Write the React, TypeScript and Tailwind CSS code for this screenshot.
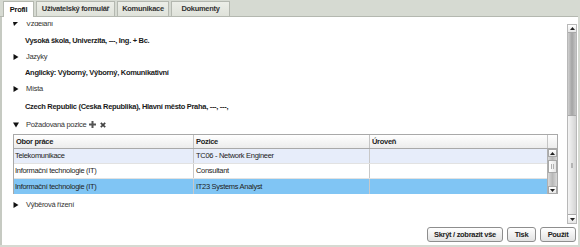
import React from "react";

function Tri({ down }: { down?: boolean }) {
  return (
    <svg width="6" height="6" viewBox="0 0 6 6" className="shrink-0">
      {down ? <polygon points="0,0.5 6,0.5 3,5.5" fill="#111" /> : <polygon points="0.5,0 5.5,3 0.5,6" fill="#111" />}
    </svg>
  );
}

function SmallArrow({ up }: { up?: boolean }) {
  return (
    <svg width="5" height="3" viewBox="0 0 5 3">
      {up ? <polygon points="0,3 5,3 2.5,0" fill="#222" /> : <polygon points="0,0 5,0 2.5,3" fill="#222" />}
    </svg>
  );
}

function Tab({ label, active, w }: { label: string; active?: boolean; w: string }) {
  return (
    <div
      className={
        active
          ? `${w} h-[16px] -mb-px bg-white border border-b-0 border-[#b4b8b0] flex items-center justify-center font-bold text-[#111]`
          : `${w} h-[15px] bg-gradient-to-b from-[#eceee8] to-[#dfe2da] border border-b-0 border-[#b4b8b0] flex items-center justify-center font-bold text-[#333]`
      }
    >
      {label}
    </div>
  );
}

function Section({ label, down, children }: { label: string; down?: boolean; children?: React.ReactNode }) {
  return (
    <div className="h-[16px] flex items-center gap-[7px] text-[#333]">
      <Tri down={down} />
      <span>{label}</span>
      {children}
    </div>
  );
}

function Value({ text, h }: { text: string; h: string }) {
  return <div className={`${h} flex items-center pl-[12px] font-bold text-[#1a1a1a]`}>{text}</div>;
}

function Button({ label, w }: { label: string; w: string }) {
  return (
    <div className={`${w} h-[15px] rounded-[3px] border border-[#8e8e8e] bg-gradient-to-b from-white to-[#e2e2e2] flex items-center justify-center font-bold text-[#222]`}>
      {label}
    </div>
  );
}

const rows = [
  { a: "Telekomunikace", b: "TC06 - Network Engineer", bg: "bg-[#e7edfa]" },
  { a: "Informační technologie (IT)", b: "Consultant", bg: "bg-white" },
  { a: "Informační technologie (IT)", b: "IT23 Systems Analyst", bg: "bg-[#80c5f4]" },
];

export default function App() {
  return (
    <div className="w-[580px] h-[247px] bg-[#d6dad2] flex flex-col overflow-hidden font-['Liberation_Sans',Arial,sans-serif] text-[7.5px] tracking-[-0.3px] text-[#222]">
      {/* tab bar */}
      <div className="h-[17px] shrink-0 flex items-end gap-[2px] pl-[3px] border-b border-[#b4b8b0] mr-[2px]">
        <Tab label="Profil" active w="w-[31px]" />
        <Tab label="Uživatelský formulář" w="w-[79px]" />
        <Tab label="Komunikace" w="w-[52px]" />
        <Tab label="Dokumenty" w="w-[59px]" />
      </div>

      {/* panel */}
      <div className="flex-1 min-h-0 bg-white border-l-2 border-[#c6cac2] mr-[2px] mb-[2px] flex flex-col pt-[5px]">
        <div className="h-[202px] shrink-0 flex">
          {/* scroll viewport */}
          <div className="flex-1 overflow-hidden pl-[11px]">
            <div className="-mt-[7px] flex flex-col">
              <div className="h-[17px] flex items-center gap-[7px] text-[#333]">
                <svg width="6" height="6" viewBox="0 0 6 6" className="shrink-0">
                  <polygon points="0,1 6,0 1,5" fill="#111" />
                </svg>
                <span>Vzdělání</span>
              </div>
              <Value h="h-[17px]" text="Vysoká škola, Univerzita, ---, Ing. + Bc." />
              <Section label="Jazyky" />
              <Value h="h-[16px]" text="Anglický: Výborný, Výborný, Komunikativní" />
              <Section label="Místa" />
              <Value h="h-[19px]" text="Czech Republic (Ceska Republika), Hlavní město Praha, ---, ---," />
              <div className="h-[17px] flex items-center gap-[7px] text-[#333]">
                <Tri down />
                <span>Požadovaná pozice</span>
                <div className="flex items-center gap-[4px] -ml-[4px]">
                  <svg width="7" height="7" viewBox="0 0 7 7">
                    <rect x="2.5" y="0" width="2" height="7" fill="#555" />
                    <rect x="0" y="2.5" width="7" height="2" fill="#555" />
                  </svg>
                  <svg width="6" height="6" viewBox="0 0 6 6">
                    <path d="M0.8 0.8 L5.2 5.2 M5.2 0.8 L0.8 5.2" stroke="#444" strokeWidth="1.7" />
                  </svg>
                </div>
              </div>

              {/* table */}
              <div className="mt-[1px] w-[545px] border border-b-0 border-[#a9a9a9] flex flex-col">
                <div className="h-[14px] flex border-b border-[#a9a9a9] bg-gradient-to-b from-white to-[#ececec] font-bold text-[#222]">
                  <div className="w-[180px] border-r border-[#c4c4c4] flex items-center pl-[2px]">Obor práce</div>
                  <div className="w-[176px] border-r border-[#c4c4c4] flex items-center pl-[2px]">Pozice</div>
                  <div className="flex-1 border-r border-[#c4c4c4] flex items-center pl-[2px]">Úroveň</div>
                  <div className="w-[9px]" />
                </div>
                <div className="flex">
                  <div className="flex-1 flex flex-col">
                    {rows.map((r, i) => (
                      <div key={i} className={`h-[15px] flex ${r.bg} ${i < 2 ? "border-b border-[#e2e2e2]" : ""}`}>
                        <div className="w-[180px] border-r border-[#c8c8c8] flex items-center pl-[1px]">{r.a}</div>
                        <div className="w-[176px] border-r border-[#c8c8c8] flex items-center pl-[2px]">{r.b}</div>
                        <div className="flex-1" />
                      </div>
                    ))}
                  </div>
                  <div className="w-[10px] border-l border-[#b0b0b0] flex flex-col bg-gradient-to-r from-[#d8d8d8] via-[#b8b8b8] to-[#d8d8d8]">
                    <div className="h-[8px] border border-[#a8a8a8] bg-gradient-to-b from-white to-[#e8e8e8] flex items-center justify-center">
                      <SmallArrow up />
                    </div>
                    <div className="mt-[3px] h-[13px] border border-[#a8a8a8] bg-gradient-to-r from-white to-[#e6e6e6] flex items-center justify-center">
                      <div className="w-[3px] h-[5px] border-x border-[#b0b0b0]" />
                    </div>
                    <div className="flex-1" />
                    <div className="h-[8px] border border-[#a8a8a8] bg-gradient-to-b from-white to-[#e8e8e8] flex items-center justify-center">
                      <SmallArrow />
                    </div>
                  </div>
                </div>
              </div>

              <div className="mt-[2px] h-[17px] flex items-center gap-[7px] text-[#333]">
                <Tri />
                <span>Výběrová řízení</span>
              </div>
            </div>
          </div>

          {/* outer scrollbar */}
          <div className="w-[10px] mt-[2px] mr-[1px] flex flex-col border border-[#b8b8b8] bg-gradient-to-r from-[#d0d0d0] via-[#a4a4a4] to-[#c8c8c8]">
            <div className="h-[8px] bg-gradient-to-b from-white to-[#e6e6e6] border-b border-[#aaaaaa] flex items-center justify-center">
              <SmallArrow up />
            </div>
            <div className="flex-1" />
            <div className="h-[100px] bg-gradient-to-r from-[#f4f4f4] via-[#e4e4e4] to-[#d4d4d4] border-y border-[#a8a8a8] flex items-center justify-center">
              <div className="w-[2px] h-[5px] border-x border-[#b4b4b4]" />
            </div>
            <div className="h-[8px] bg-gradient-to-b from-white to-[#e6e6e6] flex items-center justify-center">
              <SmallArrow />
            </div>
          </div>
        </div>

        {/* buttons */}
        <div className="flex-1 flex justify-end items-start pt-[3px] gap-[4px] pr-[2px]">
          <Button label="Skrýt / zobrazit vše" w="w-[76px]" />
          <Button label="Tisk" w="w-[29px]" />
          <Button label="Použít" w="w-[36px]" />
        </div>
      </div>
    </div>
  );
}
